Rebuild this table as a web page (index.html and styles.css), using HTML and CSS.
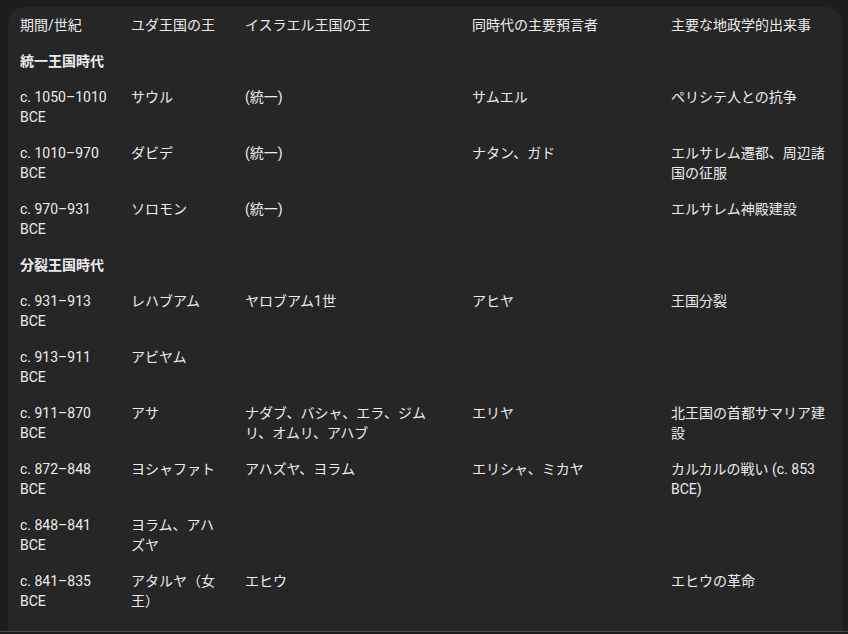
FILE: index.html
```html
<!DOCTYPE html>
<html lang="ja">
<head>
<meta charset="utf-8">
<link rel="stylesheet" href="styles.css">
</head>
<body>
<div class="page">
  <div class="panel">
    <table class="kings">
      <colgroup>
        <col class="c1"><col class="c2"><col class="c3"><col class="c4"><col class="c5">
      </colgroup>
      <thead>
        <tr><th>期間/世紀</th><th>ユダ王国の王</th><th>イスラエル王国の王</th><th>同時代の主要預言者</th><th>主要な地政学的出来事</th></tr>
      </thead>
      <tbody>
        <tr class="section"><td><strong>統一王国時代</strong></td><td></td><td></td><td></td><td></td></tr>
        <tr><td>c. 1050–1010 BCE</td><td>サウル</td><td>(統一)</td><td>サムエル</td><td>ペリシテ人との抗争</td></tr>
        <tr><td>c. 1010–970 BCE</td><td>ダビデ</td><td>(統一)</td><td>ナタン、ガド</td><td>エルサレム遷都、周辺諸国の征服</td></tr>
        <tr><td>c. 970–931 BCE</td><td>ソロモン</td><td>(統一)</td><td></td><td>エルサレム神殿建設</td></tr>
        <tr class="section"><td><strong>分裂王国時代</strong></td><td></td><td></td><td></td><td></td></tr>
        <tr><td>c. 931–913 BCE</td><td>レハブアム</td><td>ヤロブアム1世</td><td>アヒヤ</td><td>王国分裂</td></tr>
        <tr><td>c. 913–911 BCE</td><td>アビヤム</td><td></td><td></td><td></td></tr>
        <tr><td>c. 911–870 BCE</td><td>アサ</td><td>ナダブ、バシャ、エラ、ジムリ、オムリ、アハブ</td><td>エリヤ</td><td>北王国の首都サマリア建設</td></tr>
        <tr><td>c. 872–848 BCE</td><td>ヨシャファト</td><td>アハズヤ、ヨラム</td><td>エリシャ、ミカヤ</td><td>カルカルの戦い (c. 853 BCE)</td></tr>
        <tr><td>c. 848–841 BCE</td><td>ヨラム、アハズヤ</td><td></td><td></td><td></td></tr>
        <tr><td>c. 841–835 BCE</td><td>アタルヤ（女王）</td><td>エヒウ</td><td></td><td>エヒウの革命</td></tr>
      </tbody>
    </table>
  </div>
</div>
<div class="bottom-bar"></div>
</body>
</html>
```

FILE: styles.css
```css
html, body {
  margin: 0;
  padding: 0;
  background: #1c1d1e;
  height: 100%;
  overflow: hidden;
}
body {
  font-family: "Roboto", "Noto Sans CJK JP", sans-serif;
  font-size: 14px;
  line-height: 20px;
  color: #ececec;
}
.page {
  padding: 7px 6px 0 8px;
}
.panel {
  background: #262626;
  border-radius: 16px 16px 0 0;
  height: 624px;
  box-sizing: border-box;
  overflow: hidden;
}
.kings {
  width: 834px;
  border-collapse: collapse;
  table-layout: fixed;
}
.c1 { width: 111px; }
.c2 { width: 114px; }
.c3 { width: 227px; }
.c4 { width: 199px; }
.c5 { width: 183px; }
.kings th,
.kings td {
  padding: 8px 12px;
  text-align: left;
  vertical-align: top;
  font-weight: 400;
}
.kings strong {
  font-weight: 700;
}
.bottom-bar {
  border-top: 1px solid #4c4c4c;
  background: #1c1d1e;
  height: 2px;
}
```
